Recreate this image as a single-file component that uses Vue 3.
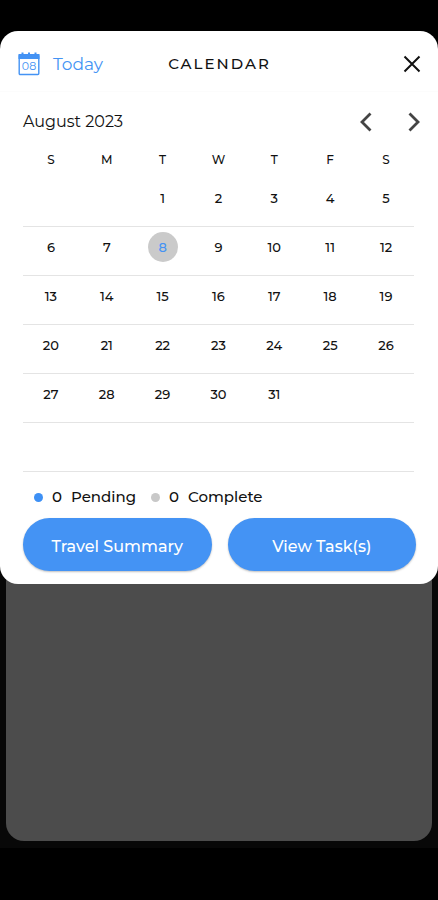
<script setup>
import { ref } from 'vue'

const weekdays = [
  { short: 'S', name: 'Sunday' },
  { short: 'M', name: 'Monday' },
  { short: 'T', name: 'Tuesday' },
  { short: 'W', name: 'Wednesday' },
  { short: 'T', name: 'Thursday' },
  { short: 'F', name: 'Friday' },
  { short: 'S', name: 'Saturday' },
]

// August 2023 starts on a Tuesday; six week rows are always shown.
const offset = 2
const days = 31
const weeks = Array.from({ length: 6 }, (_, w) =>
  Array.from({ length: 7 }, (_, d) => {
    const n = w * 7 + d - offset + 1
    return n >= 1 && n <= days ? n : null
  })
)

const selected = ref(8)
</script>

<template>
  <div class="screen">
    <main class="sheet">
      <header class="header">
        <button type="button" class="today" @click="selected = 8">
          <svg class="today-icon" viewBox="0 0 22 24" aria-hidden="true">
            <path d="M0.500 2h3V0.500h2V2h4.500V0.500h2V2h4.500V0.500h2V2h3v5H0.500z" fill="#4493f4" />
            <rect x="1.200" y="3" width="19.600" height="19.500" rx="1" fill="none" stroke="#4493f4" stroke-width="1.400" />
            <text x="11" y="18" text-anchor="middle" class="today-number">08</text>
          </svg>
          <span>Today</span>
        </button>
        <h1 class="title">CALENDAR</h1>
        <button type="button" class="icon-button close" aria-label="Close">
          <svg width="18" height="18" viewBox="0 0 18 18" aria-hidden="true">
            <path d="M1.500 1.500l15 15M16.500 1.500l-15 15" fill="none" stroke="#111" stroke-width="2" />
          </svg>
        </button>
      </header>

      <section class="month">
        <h2 class="month-name">August 2023</h2>
        <nav class="month-nav">
          <button type="button" class="icon-button" aria-label="Previous month">
            <svg width="14" height="20" viewBox="0 0 14 20" aria-hidden="true">
              <path d="M11.500 1.500L3 10l8.500 8.500" fill="none" stroke="#444" stroke-width="2.800" />
            </svg>
          </button>
          <button type="button" class="icon-button" aria-label="Next month">
            <svg width="14" height="20" viewBox="0 0 14 20" aria-hidden="true">
              <path d="M2.500 1.500L11 10l-8.500 8.500" fill="none" stroke="#444" stroke-width="2.800" />
            </svg>
          </button>
        </nav>
      </section>

      <table class="grid">
        <thead>
          <tr>
            <th v-for="day in weekdays" :key="day.name" scope="col" :abbr="day.name">{{ day.short }}</th>
          </tr>
        </thead>
        <tbody>
          <tr v-for="(week, w) in weeks" :key="w">
            <td v-for="(n, d) in week" :key="d">
              <button
                v-if="n"
                type="button"
                class="day"
                :class="{ selected: n === selected }"
                @click="selected = n"
              >{{ n }}</button>
            </td>
          </tr>
        </tbody>
      </table>

      <ul class="legend">
        <li><i class="dot pending"></i><span>0</span><span>Pending</span></li>
        <li><i class="dot complete"></i><span>0</span><span>Complete</span></li>
      </ul>

      <div class="actions">
        <button type="button" class="action">Travel Summary</button>
        <button type="button" class="action">View Task(s)</button>
      </div>
    </main>
    <div class="behind">
      <div class="behind-card"></div>
    </div>
  </div>
</template>

<style>
body {
  background: #000;
}
</style>

<style scoped>
.screen {
  box-sizing: border-box;
  display: flex;
  flex-direction: column;
  min-height: 100vh;
  padding: 31px 0 52px;
  background: #000;
  color: #111;
  font-family: Montserrat, Inter, "Liberation Sans", sans-serif;
}

button {
  margin: 0;
  padding: 0;
  border: 0;
  background: none;
  color: inherit;
  font: inherit;
  cursor: pointer;
}

svg {
  display: block;
}

.sheet {
  position: relative;
  z-index: 1;
  padding-bottom: 13px;
  border-radius: 18px;
  background: #fff;
}

.header {
  display: grid;
  grid-template-columns: 1fr auto 1fr;
  align-items: center;
  height: 61px;
  padding: 6px 17px 0 18px;
  box-sizing: border-box;
  border-bottom: 1px solid #fcfcfc;
}

.today {
  display: flex;
  align-items: center;
  justify-self: start;
  gap: 13px;
  color: #4493f4;
  font-size: 17px;
  line-height: 24px;
}

.today-icon {
  width: 22px;
  height: 24px;
}

.today-number {
  fill: #4493f4;
  font-size: 11px;
}

.title {
  margin: 0;
  font-size: 15px;
  font-weight: 500;
  line-height: 24px;
  letter-spacing: 2px;
}

.icon-button {
  display: flex;
  align-items: center;
  justify-content: center;
}

.close {
  justify-self: end;
}

.month {
  display: flex;
  align-items: center;
  justify-content: space-between;
  height: 50px;
  padding: 9px 17px 0 23px;
  box-sizing: border-box;
}

.month-name {
  margin: 0;
  font-size: 16px;
  font-weight: 400;
  line-height: 24px;
}

.month-nav {
  display: flex;
  gap: 34px;
}

.grid {
  width: calc(100% - 47px);
  margin: 0 24px 0 23px;
  border-collapse: separate;
  border-spacing: 0;
  table-layout: fixed;
}

.grid th {
  height: 36px;
  padding: 0;
  font-size: 12px;
  font-weight: 500;
  line-height: 16px;
}

.grid td {
  box-sizing: border-box;
  height: 49px;
  padding: 5px 0 13px;
  border-bottom: 1px solid #e4e4e4;
  text-align: center;
}

.day {
  display: block;
  width: 30px;
  height: 30px;
  margin: 0 auto;
  border-radius: 50%;
  font-size: 13px;
  font-weight: 500;
  line-height: 30px;
}

.day.selected {
  background: #cacaca;
  color: #4493f4;
}

.legend {
  display: flex;
  gap: 15px;
  height: 46px;
  margin: 0;
  padding: 4px 34px 0;
  box-sizing: border-box;
  list-style: none;
  font-size: 15px;
  font-weight: 500;
  line-height: 24px;
}

.legend li {
  display: flex;
  align-items: center;
  gap: 9px;
}

.dot {
  width: 9px;
  height: 9px;
  border-radius: 50%;
}

.pending {
  background: #3d90f5;
}

.complete {
  background: #c8c8c8;
}

.actions {
  display: grid;
  grid-template-columns: 1fr 1fr;
  gap: 16px;
  padding: 0 22px 0 23px;
}

.action {
  height: 53px;
  padding-top: 3px;
  border-radius: 27px;
  background: #4493f4;
  box-shadow: 0 1px 2px rgba(0, 0, 0, 0.25);
  color: #fff;
  font-size: 16px;
  font-weight: 500;
}

.behind {
  display: flex;
  flex: 1;
  margin-top: -20px;
  padding: 0 6px 7px;
  background: #080808;
}

.behind-card {
  flex: 1;
  border-radius: 0 0 18px 18px;
  background: #4c4c4c;
}
</style>
